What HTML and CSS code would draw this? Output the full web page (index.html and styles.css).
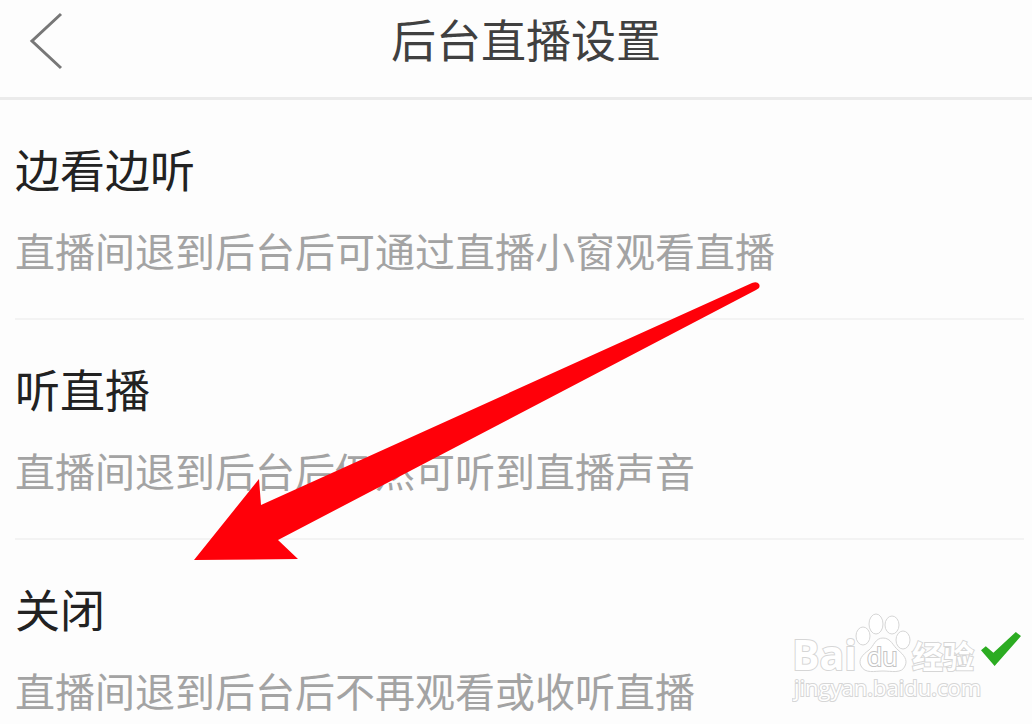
FILE: index.html
```html
<!DOCTYPE html>
<html lang="zh-CN">
<head>
    <meta charset="UTF-8">
    <meta name="viewport" content="width=device-width, initial-scale=1.0">
    <title>后台直播设置</title>
    <link rel="stylesheet" href="styles.css">
</head>
<body>
    <header class="header">
        <button class="back" type="button" aria-label="返回">
            <svg width="36" height="60" viewBox="0 0 36 60" fill="none" stroke="#777" stroke-width="3">
                <path d="M33 3 L4 30 L33 57"/>
            </svg>
        </button>
        <h1 class="title">后台直播设置</h1>
    </header>

    <main class="options">
        <label class="option">
            <span class="option-text">
                <span class="option-name">边看边听</span>
                <span class="option-desc">直播间退到后台后可通过直播小窗观看直播</span>
            </span>
            <input class="option-check" type="radio" name="mode" value="window">
        </label>
        <label class="option">
            <span class="option-text">
                <span class="option-name">听直播</span>
                <span class="option-desc">直播间退到后台后仍然可听到直播声音</span>
            </span>
            <input class="option-check" type="radio" name="mode" value="audio">
        </label>
        <label class="option">
            <span class="option-text">
                <span class="option-name">关闭</span>
                <span class="option-desc">直播间退到后台后不再观看或收听直播</span>
            </span>
            <input class="option-check" type="radio" name="mode" value="off" checked>
        </label>
    </main>

    <svg class="arrow" width="568" height="280" viewBox="0 0 568 280">
        <path fill="#ff0009" d="M0 280 L65 199 L67 225 L558 3 Q563 1 565 4 Q567 8 562 10 L84 260 L104 279 Z"/>
    </svg>

    <svg class="watermark" width="190" height="92" viewBox="0 0 190 92">
        <g class="paw">
            <ellipse cx="71" cy="24" rx="7" ry="9"/>
            <ellipse cx="84" cy="12" rx="7" ry="10"/>
            <ellipse cx="100" cy="13" rx="7" ry="9"/>
            <ellipse cx="111" cy="28" rx="7" ry="9"/>
            <path d="M91 26 C83 26 82 34 77 38 C70 43 66 48 69 54 C73 62 83 59 91 59 C99 59 110 62 113 54 C116 48 112 43 106 38 C101 34 99 26 91 26 Z"/>
        </g>
        <text class="outline brand" x="0" y="58">Bai</text>
        <text class="outline du" x="75" y="54">du</text>
        <text class="outline brand-cn" x="120" y="56">经验</text>
        <text class="outline site" x="2" y="84">jingyan.baidu.com</text>
    </svg>
</body>
</html>
```
FILE: styles.css
```css
* {
    box-sizing: border-box;
}
body {
    position: relative;
    height: 100vh;
    margin: 0;
    overflow: hidden;
    background-color: #fdfdfd;
    font-family: "Liberation Sans", "Noto Sans CJK SC", sans-serif;
}
.header {
    display: grid;
    grid-template-columns: 80px 1fr 60px;
    height: 100px;
    padding-bottom: 16px;
    border-bottom: 3px solid #ebebeb;
    align-items: center;
}
.back {
    display: flex;
    padding: 0 0 0 28px;
    border: none;
    background: none;
    cursor: pointer;
}
.title {
    margin: 0;
    padding-top: 4px;
    color: #404040;
    font-size: 45px;
    font-weight: 400;
    line-height: 60px;
    text-align: center;
}
.options {
    padding: 0 8px 0 15px;
}
.option {
    display: flex;
    height: 220px;
    padding-right: 3px;
    border-bottom: 2px solid #f3f3f3;
    align-items: center;
    justify-content: space-between;
    cursor: pointer;
}
.option-text {
    display: flex;
    flex-direction: column;
    padding-top: 8px;
    gap: 20px;
}
.option-name {
    color: #222;
    font-size: 45px;
    line-height: 60px;
}
.option-desc {
    color: #a3a3a3;
    font-size: 40px;
    line-height: 60px;
}
.option-check {
    width: 40px;
    height: 34px;
    margin: 0;
    appearance: none;
    clip-path: polygon(0 54%, 12% 42%, 31% 61%, 87% 0, 100% 12%, 34% 100%);
}
.option-check:checked {
    background-color: #2cac22;
}
.arrow {
    position: absolute;
    top: 280px;
    left: 194px;
    pointer-events: none;
}
.watermark {
    position: absolute;
    top: 612px;
    right: 50px;
    pointer-events: none;
}
.paw {
    fill: #fff;
    stroke: #d6d6d6;
    stroke-width: 1;
}
.outline {
    fill: #fff;
    stroke: #d6d6d6;
    stroke-width: 2;
    paint-order: stroke;
    font-family: "Open Sans", "Noto Sans CJK SC", sans-serif;
}
.brand {
    font-size: 41px;
    font-weight: 700;
}
.du {
    stroke: #c4c4c4;
    font-size: 25px;
}
.brand-cn {
    font-size: 31px;
    font-weight: 700;
}
.site {
    font-size: 22px;
}
```
